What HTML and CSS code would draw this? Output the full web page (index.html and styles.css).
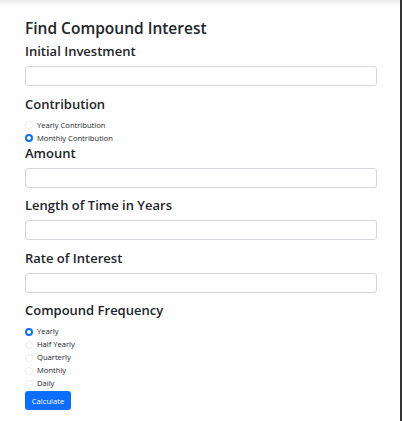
FILE: index.html
```html
<!DOCTYPE html>
<html>
<head>
<meta charset="utf-8">
<link rel="stylesheet" href="styles.css">
</head>
<body>
<div class="page">
  <form class="calc">
    <h2 class="title">Find Compound Interest</h2>
    <h3 class="label first">Initial Investment</h3>
    <input class="field" type="text">
    <h3 class="label gap">Contribution</h3>
    <div class="radios">
      <label class="opt"><span class="dot"></span>Yearly Contribution</label>
      <label class="opt"><span class="dot on"></span>Monthly Contribution</label>
    </div>
    <h3 class="label amount">Amount</h3>
    <input class="field" type="text">
    <h3 class="label gap">Length of Time in Years</h3>
    <input class="field" type="text">
    <h3 class="label gap">Rate of Interest</h3>
    <input class="field" type="text">
    <h3 class="label gap">Compound Frequency</h3>
    <div class="radios">
      <label class="opt"><span class="dot on"></span>Yearly</label>
      <label class="opt"><span class="dot"></span>Half Yearly</label>
      <label class="opt"><span class="dot"></span>Quarterly</label>
      <label class="opt"><span class="dot"></span>Monthly</label>
      <label class="opt"><span class="dot"></span>Daily</label>
    </div>
    <button class="btn" type="button">Calculate</button>
  </form>
</div>
</body>
</html>
```
FILE: styles.css
```css
html, body {
  margin: 0;
  padding: 0;
}
body {
  width: 402px;
  height: 421px;
  overflow: hidden;
  background: linear-gradient(#e9e9e9, #fbfbfb 5px, #fefefe 8px);
  font-family: "Open Sans", "Noto Sans", sans-serif;
  color: #212529;
}
.page {
  box-sizing: border-box;
  height: 421px;
  width: 402px;
  border-right: 2px solid #333;
  padding: 18px 0 0 25px;
}
.calc {
  display: flex;
  flex-direction: column;
  width: 352px;
}
.title {
  margin: 0;
  font-size: 15.5px;
  font-weight: 600;
  line-height: 20px;
}
.label {
  margin: 0;
  font-size: 13px;
  font-weight: 600;
  line-height: 16px;
}
.first {
  margin-top: 5px;
}
.gap {
  margin-top: 9.5px;
}
.field {
  box-sizing: border-box;
  margin: 7px 0 0;
  height: 20px;
  width: 352px;
  border: 1px solid #d3d7dc;
  border-radius: 3px;
  background: #fff;
  padding: 0;
}
.radios {
  display: flex;
  flex-direction: column;
  margin-top: 7px;
}
.opt {
  display: flex;
  align-items: center;
  gap: 4px;
  height: 13px;
  font-size: 7.6px;
  line-height: 13px;
  color: #212529;
}
.dot {
  box-sizing: border-box;
  width: 8px;
  height: 8px;
  border-radius: 50%;
  border: 1px solid #eceef0;
  background: #fff;
}
.dot.on {
  border: 2.5px solid #0d6efd;
  background: #fff;
}
.amount {
  margin-top: 0;
}
.btn {
  align-self: flex-start;
  margin-top: 1px;
  height: 19px;
  width: 46px;
  padding: 0;
  border: none;
  border-radius: 3px;
  background: #0d6efd;
  color: #fff;
  font-family: "Open Sans", sans-serif;
  font-size: 7.6px;
}
```
